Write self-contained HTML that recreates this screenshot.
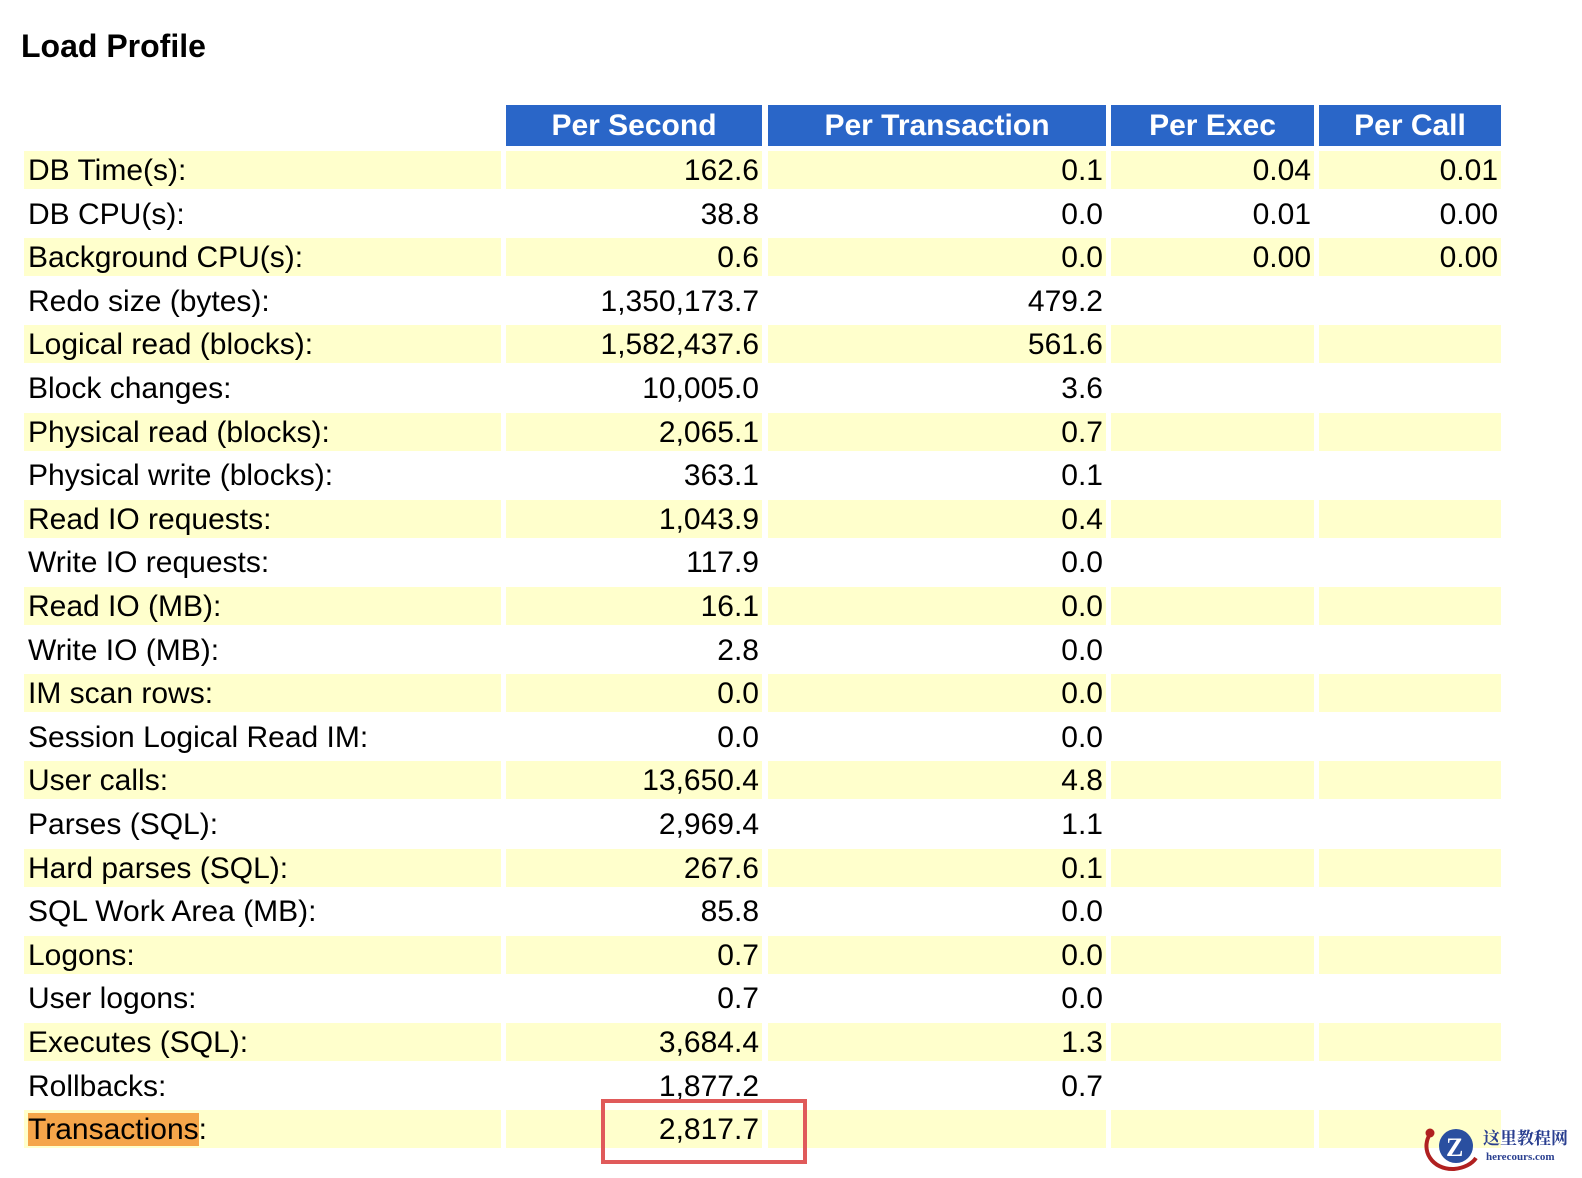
<!DOCTYPE html>
<html><head><meta charset="utf-8"><style>
body{margin:0;background:#fff;width:1582px;height:1178px;overflow:hidden;position:relative;font-family:"Liberation Sans",Arial,sans-serif;}
h1{position:absolute;left:21px;top:28px;margin:0;font-size:32px;font-weight:bold;color:#000;}
.r{position:absolute;left:0;width:1582px;height:38px;font-size:30px;line-height:40px;color:#000;}
.r div{position:absolute;top:0;height:38px;box-sizing:border-box;white-space:nowrap;}
.r.y div{background:#ffffcc;}
.a{left:24px;width:477px;padding-left:4px;}
.b{left:506px;width:256px;text-align:right;padding-right:3px;}
.c{left:768px;width:338px;text-align:right;padding-right:3px;}
.d{left:1111px;width:203px;text-align:right;padding-right:3px;}
.e{left:1319px;width:182px;text-align:right;padding-right:3px;}
.h{position:absolute;top:105px;height:41px;background:#2a66c8;color:#fff;font-weight:bold;font-size:30px;line-height:41px;text-align:center;}
.hl{background:#f5a54a;}
.box{position:absolute;left:601px;top:1099px;width:198px;height:57px;border:4px solid #e05a5a;}
.logo{position:absolute;left:1420px;top:1122px;width:160px;height:52px;}
</style></head><body>
<h1>Load Profile</h1>
<div class="h" style="left:506px;width:256px">Per Second</div>
<div class="h" style="left:768px;width:338px">Per Transaction</div>
<div class="h" style="left:1111px;width:203px">Per Exec</div>
<div class="h" style="left:1319px;width:182px">Per Call</div>
<div class="r y" style="top:151px"><div class="a">DB Time(s):</div><div class="b">162.6</div><div class="c">0.1</div><div class="d">0.04</div><div class="e">0.01</div></div>
<div class="r" style="top:195px"><div class="a">DB CPU(s):</div><div class="b">38.8</div><div class="c">0.0</div><div class="d">0.01</div><div class="e">0.00</div></div>
<div class="r y" style="top:238px"><div class="a">Background CPU(s):</div><div class="b">0.6</div><div class="c">0.0</div><div class="d">0.00</div><div class="e">0.00</div></div>
<div class="r" style="top:282px"><div class="a">Redo size (bytes):</div><div class="b">1,350,173.7</div><div class="c">479.2</div></div>
<div class="r y" style="top:325px"><div class="a">Logical read (blocks):</div><div class="b">1,582,437.6</div><div class="c">561.6</div><div class="d"></div><div class="e"></div></div>
<div class="r" style="top:369px"><div class="a">Block changes:</div><div class="b">10,005.0</div><div class="c">3.6</div></div>
<div class="r y" style="top:413px"><div class="a">Physical read (blocks):</div><div class="b">2,065.1</div><div class="c">0.7</div><div class="d"></div><div class="e"></div></div>
<div class="r" style="top:456px"><div class="a">Physical write (blocks):</div><div class="b">363.1</div><div class="c">0.1</div></div>
<div class="r y" style="top:500px"><div class="a">Read IO requests:</div><div class="b">1,043.9</div><div class="c">0.4</div><div class="d"></div><div class="e"></div></div>
<div class="r" style="top:543px"><div class="a">Write IO requests:</div><div class="b">117.9</div><div class="c">0.0</div></div>
<div class="r y" style="top:587px"><div class="a">Read IO (MB):</div><div class="b">16.1</div><div class="c">0.0</div><div class="d"></div><div class="e"></div></div>
<div class="r" style="top:631px"><div class="a">Write IO (MB):</div><div class="b">2.8</div><div class="c">0.0</div></div>
<div class="r y" style="top:674px"><div class="a">IM scan rows:</div><div class="b">0.0</div><div class="c">0.0</div><div class="d"></div><div class="e"></div></div>
<div class="r" style="top:718px"><div class="a">Session Logical Read IM:</div><div class="b">0.0</div><div class="c">0.0</div></div>
<div class="r y" style="top:761px"><div class="a">User calls:</div><div class="b">13,650.4</div><div class="c">4.8</div><div class="d"></div><div class="e"></div></div>
<div class="r" style="top:805px"><div class="a">Parses (SQL):</div><div class="b">2,969.4</div><div class="c">1.1</div></div>
<div class="r y" style="top:849px"><div class="a">Hard parses (SQL):</div><div class="b">267.6</div><div class="c">0.1</div><div class="d"></div><div class="e"></div></div>
<div class="r" style="top:892px"><div class="a">SQL Work Area (MB):</div><div class="b">85.8</div><div class="c">0.0</div></div>
<div class="r y" style="top:936px"><div class="a">Logons:</div><div class="b">0.7</div><div class="c">0.0</div><div class="d"></div><div class="e"></div></div>
<div class="r" style="top:979px"><div class="a">User logons:</div><div class="b">0.7</div><div class="c">0.0</div></div>
<div class="r y" style="top:1023px"><div class="a">Executes (SQL):</div><div class="b">3,684.4</div><div class="c">1.3</div><div class="d"></div><div class="e"></div></div>
<div class="r" style="top:1067px"><div class="a">Rollbacks:</div><div class="b">1,877.2</div><div class="c">0.7</div></div>
<div class="r y" style="top:1110px"><div class="a"><span class="hl">Transactions</span>:</div><div class="b">2,817.7</div><div class="c"></div><div class="d"></div><div class="e"></div></div>
<div class="box"></div>
<svg class="logo" viewBox="0 0 160 52">
<path d="M10 12 C0 28 12 48 34 47 C44 46 52 42 56 36" fill="none" stroke="#b02020" stroke-width="4"/>
<circle cx="10" cy="11" r="4.5" fill="#b02020"/>
<circle cx="36" cy="24" r="17" fill="#2a4fa0"/>
<text x="26" y="34" font-family="Liberation Serif,serif" font-weight="bold" font-size="26" fill="#fff">Z</text>
<text x="63" y="22" font-family="'Liberation Serif','Noto Serif CJK SC',serif" font-weight="bold" font-size="17" fill="#2a3f90">这里教程网</text>
<text x="66" y="38" font-family="Liberation Serif,serif" font-weight="bold" font-size="11" fill="#2a3f90">herecours.com</text>
</svg>
</body></html>
